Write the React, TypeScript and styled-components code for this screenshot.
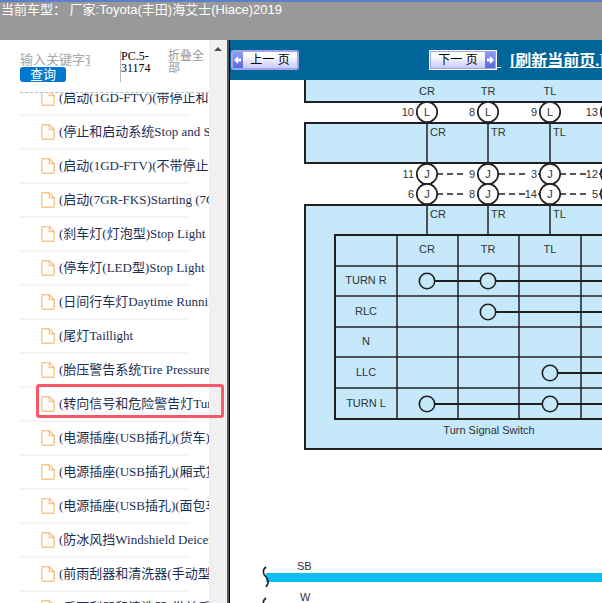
import React from 'react';
import styled, { createGlobalStyle } from 'styled-components';

const SANS = `"Liberation Sans", "Noto Sans CJK SC", sans-serif`;
const SERIF = `"Liberation Serif", "Noto Sans CJK SC", serif`;
const INK = '#231f20';
const PANEL = '#c5e9fa';

const GlobalStyle = createGlobalStyle`
  * { box-sizing: border-box; }
  body { margin: 0; background: #fff; font-family: ${SERIF}; }
`;

const Page = styled.div`
  display: flex;
  flex-direction: column;
  height: 100vh;
  overflow: hidden;
`;

const Header = styled.header`
  flex: 0 0 40px;
  padding-left: 1px;
  border-top: 2px solid #5a80cc;
  background: #999;
  color: #fff;
  font: 13px/16px ${SANS};
  white-space: pre;
`;

const Frames = styled.div`
  display: flex;
  flex: 1;
  min-height: 0;
`;

const Sidebar = styled.aside`
  position: relative;
  display: flex;
  flex: 0 0 230px;
  min-width: 0;
  border-right: 1px solid #000;
`;

const SidebarBody = styled.div`
  display: flex;
  flex-direction: column;
  flex: 1;
  min-width: 0;
  padding-left: 20px;
  overflow: hidden;
`;

const ScrollTrack = styled.div`
  display: flex;
  flex: 0 0 17px;
  justify-content: center;
  padding-top: 7px;
  background: #f0f0f0;
`;

const FrameEdge = styled.div`
  flex: 0 0 3px;
  background: linear-gradient(90deg, #f0f0f0 1px, #555 1px);
`;

const SearchBar = styled.form`
  display: flex;
  flex: 0 0 53px;
  padding-top: 10px;
  border-bottom: 1px dashed #bbb;
`;

const SearchFields = styled.div`
  display: flex;
  flex-direction: column;
  align-items: flex-start;
  flex: 0 0 100px;
  padding-top: 2px;
`;

const KeywordInput = styled.input`
  width: 70px;
  height: 15px;
  padding: 0;
  border: 0;
  outline: 0;
  background: transparent;
  color: #333;
  font: 13px/15px ${SANS};
  &::placeholder { color: #a6a6a6; opacity: 1; }
`;

const SearchButton = styled.button`
  width: 46px;
  height: 15px;
  padding: 0;
  border: 0;
  border-radius: 3px;
  background: #0078d0;
  color: #fff;
  font: 13px/14px ${SANS};
`;

const Code = styled.span`
  flex: 0 0 48px;
  height: 32px;
  border-left: 1px solid #bbb;
  font-size: 12px;
  line-height: 12px;
`;

const CollapseLink = styled.a`
  width: 38px;
  color: #999;
  font: 12px/12px ${SANS};
  text-decoration: none;
`;

const ListView = styled.nav`
  flex: 1;
  min-height: 0;
  overflow: hidden;
`;

const List = styled.ul`
  margin: -11px 20px 0 0;
  padding: 0;
  list-style: none;
`;

const Item = styled.li`
  height: 34px;
  padding-left: 21px;
  border-bottom: 2px solid #f5f5f5;
`;

const ItemLink = styled.a`
  display: flex;
  align-items: center;
  gap: 4px;
  height: 32px;
  color: #1b2f55;
  font-size: 13px;
  line-height: 18px;
  text-decoration: none;
  white-space: nowrap;
  svg { flex: none; }
`;

const Marker = styled.div`
  position: absolute;
  top: 344px;
  left: 36px;
  width: 188px;
  height: 34px;
  border: 3px solid #fb5868;
  border-radius: 3px;
  pointer-events: none;
`;

const Main = styled.main`
  display: flex;
  flex-direction: column;
  flex: 1;
  min-width: 0;
`;

const Toolbar = styled.div`
  display: flex;
  align-items: center;
  flex: 0 0 40px;
  padding-left: 1px;
  overflow: hidden;
  background: #006699;
  white-space: nowrap;
`;

const PageButton = styled.button<{ $next?: boolean }>`
  display: flex;
  flex: 0 0 68px;
  flex-direction: ${(p) => (p.$next ? 'row-reverse' : 'row')};
  align-items: stretch;
  height: 20px;
  margin-left: ${(p) => (p.$next ? '130px' : '0')};
  padding: 0;
  overflow: hidden;
  border: 2px solid #a3a5e6;
  border-radius: ${(p) => (p.$next ? '0' : '3px')};
  outline: ${(p) => (p.$next ? '1px solid #fff' : '0')};
  outline-offset: -1px;
  background: linear-gradient(#fff 20%, #c9c9fb);
  color: #000;
  font: 12px/16px ${SANS};
`;

const ArrowCell = styled.span`
  display: flex;
  align-items: center;
  justify-content: center;
  flex: 0 0 10px;
  background: linear-gradient(#8f9bf8, #5a67dc);
`;

const ButtonText = styled.span`
  flex: 1;
  text-align: center;
  white-space: pre;
`;

const LinkText = styled.span`
  flex: none;
  padding-top: 2px;
  color: #fff;
  font: bold 16px/20px ${SERIF};
  text-decoration: underline;
  text-decoration-skip-ink: none;
`;

const RefreshLink = styled(LinkText)`
  margin-left: 9px;
`;

const Diagram = styled.svg`
  display: block;
  flex: 1;
  width: 100%;
  min-height: 0;
  background: #fff;
  text { font: 11px ${SANS}; fill: #333; }
`;

const items = [
  '(启动(1GD-FTV)(带停止和启动系统)Starting',
  '(停止和启动系统Stop and Start System',
  '(启动(1GD-FTV)(不带停止和启动系统)Starting',
  '(启动(7GR-FKS)Starting (7GR-FKS)',
  '(刹车灯(灯泡型)Stop Light',
  '(停车灯(LED型)Stop Light',
  '(日间行车灯Daytime Running Light',
  '(尾灯Taillight',
  '(胎压警告系统Tire Pressure Warning System',
  '(转向信号和危险警告灯Turn Signal and Hazard',
  '(电源插座(USB插孔)(货车)Power Outlet',
  '(电源插座(USB插孔)(厢式货车)Power Outlet',
  '(电源插座(USB插孔)(面包车)Power Outlet',
  '(防冰风挡Windshield Deicer',
  '(前雨刮器和清洗器(手动型)Front Wiper',
  '(后雨刮器和清洗器(带前后雨刮)Rear Wiper',
];

const wires = [
  { x: 197, name: 'CR', top: '10', upper: '11', lower: '6' },
  { x: 258, name: 'TR', top: '8', upper: '9', lower: '8' },
  { x: 320, name: 'TL', top: '9', upper: '3', lower: '14' },
  { x: 381, name: '', top: '13', upper: '12', lower: '5' },
];

const switchRows = [
  { name: 'TURN R', y: 201, contacts: [197, 258] },
  { name: 'RLC', y: 232, contacts: [258] },
  { name: 'N', y: 262, contacts: [] },
  { name: 'LLC', y: 293, contacts: [320] },
  { name: 'TURN L', y: 324, contacts: [197, 320] },
];

const FileIcon = () => (
  <svg width="14" height="16" viewBox="0 0 14 16" fill="none" stroke="#f9c78d" strokeWidth="1.5" aria-hidden="true">
    <path d="M2 .8H8.5L13.2 5.5V14Q13.2 15.2 12 15.2H2Q.8 15.2 .8 14V2Q.8 .8 2 .8Z" />
    <path d="M8.3 1V5.7H13" stroke="#f5bb78" strokeWidth="1.2" />
  </svg>
);

const Arrow = ({ right }: { right?: boolean }) => (
  <svg width="8" height="8" viewBox="0 0 8 8" fill="#fff" aria-hidden="true">
    <path d={right ? 'M8 4L4 0V2.5H1V5.5H4V8Z' : 'M0 4L4 0V2.5H7V5.5H4V8Z'} />
  </svg>
);

const Pin = ({ x, y, letter, label }: { x: number; y: number; letter: string; label: string }) => (
  <g>
    <circle cx={x} cy={y} r="10.2" fill="#fff" stroke={INK} strokeWidth="1.7" />
    <text x={x} y={y + 4} textAnchor="middle">{letter}</text>
    <text x={x - 13} y={y + 4} textAnchor="end">{label}</text>
  </g>
);

function WiringDiagram() {
  return (
    <Diagram role="img" aria-label="Turn Signal Switch">
      <g fill={PANEL} stroke={INK} strokeWidth="2">
        <rect x="75" y="-10" width="2000" height="32" />
        <rect x="75" y="43" width="2000" height="40" />
        <rect x="75" y="125" width="2000" height="244" />
        <rect x="105" y="155" width="2000" height="184" />
      </g>
      <g stroke={INK} strokeWidth="1.5">
        {[186, 216, 247, 277, 308].map((y) => <line key={y} x1="105" x2="2100" y1={y} y2={y} />)}
        {[167, 228, 289, 351].map((x) => <line key={x} x1={x} x2={x} y1="155" y2="339" />)}
        {wires.map(({ x }) => (
          <path key={x} d={`M${x} 43V83M${x} 125V155`} />
        ))}
      </g>
      <g stroke={INK} strokeWidth="1.5" strokeDasharray="6 4">
        {[207, 269, 330].map((x) => (
          <path key={x} d={`M${x} 94H${x + 26}M${x} 114H${x + 26}`} />
        ))}
      </g>
      <path d="M308 94H311M308 114H311M369 94H371M369 114H371" stroke={INK} strokeWidth="1.5" />
      {wires.map((w) => (
        <g key={w.x}>
          <text x={w.x} y="15" textAnchor="middle">{w.name}</text>
          <text x={w.x + 3} y="56">{w.name}</text>
          <text x={w.x + 3} y="138">{w.name}</text>
          <text x={w.x} y="173" textAnchor="middle">{w.name}</text>
          <Pin x={w.x} y={32} letter="L" label={w.top} />
          <Pin x={w.x} y={94} letter="J" label={w.upper} />
          <Pin x={w.x} y={114} letter="J" label={w.lower} />
        </g>
      ))}
      {switchRows.map((row) => (
        <g key={row.name}>
          <text x="136" y={row.y + 3} textAnchor="middle">{row.name}</text>
          {row.contacts.length > 0 && (
            <line x1={row.contacts[0]} x2="2100" y1={row.y} y2={row.y} stroke={INK} strokeWidth="2" />
          )}
          {row.contacts.map((x) => (
            <circle key={x} cx={x} cy={row.y} r="7.7" fill={PANEL} stroke={INK} strokeWidth="1.6" />
          ))}
        </g>
      ))}
      <text x="259" y="354" textAnchor="middle">Turn Signal Switch</text>
      <rect x="36" y="493" width="2100" height="9" fill="#0abef0" />
      <text x="67" y="490">SB</text>
      <text x="70" y="521">W</text>
      <g stroke={INK} strokeWidth="1.6" fill="none">
        <path d="M36 487C32 490 33 494 36 497C39 500 39 503 36 507" />
        <path d="M36 518C32 521 33 525 36 528" />
      </g>
    </Diagram>
  );
}

export default function App() {
  return (
    <Page>
      <GlobalStyle />
      <Header>当前车型： 厂家:Toyota(丰田)海艾士(Hiace)2019</Header>
      <Frames>
        <Sidebar>
          <SidebarBody>
            <SearchBar onSubmit={(e) => e.preventDefault()}>
              <SearchFields>
                <KeywordInput aria-label="输入关键字查询" placeholder="输入关键字查询" />
                <SearchButton type="submit">查询</SearchButton>
              </SearchFields>
              <Code>PC.5-31174</Code>
              <CollapseLink href="#">折叠全部</CollapseLink>
            </SearchBar>
            <ListView>
              <List>
                {items.map((label) => (
                  <Item key={label}>
                    <ItemLink href="#">
                      <FileIcon />
                      <span>{label}</span>
                    </ItemLink>
                  </Item>
                ))}
              </List>
            </ListView>
          </SidebarBody>
          <ScrollTrack>
            <svg width="8" height="4" viewBox="0 0 8 4" fill="#505050" aria-hidden="true">
              <path d="M4 0L8 4H0Z" />
            </svg>
          </ScrollTrack>
          <FrameEdge />
          <Marker />
        </Sidebar>
        <Main>
          <Toolbar>
            <PageButton type="button">
              <ArrowCell><Arrow /></ArrowCell>
              <ButtonText>上一 页</ButtonText>
            </PageButton>
            <PageButton type="button" $next>
              <ArrowCell><Arrow right /></ArrowCell>
              <ButtonText>下一 页</ButtonText>
            </PageButton>
            <LinkText>&nbsp;</LinkText>
            <RefreshLink as="a" href="#">[刷新当前页.]</RefreshLink>
          </Toolbar>
          <WiringDiagram />
        </Main>
      </Frames>
    </Page>
  );
}
